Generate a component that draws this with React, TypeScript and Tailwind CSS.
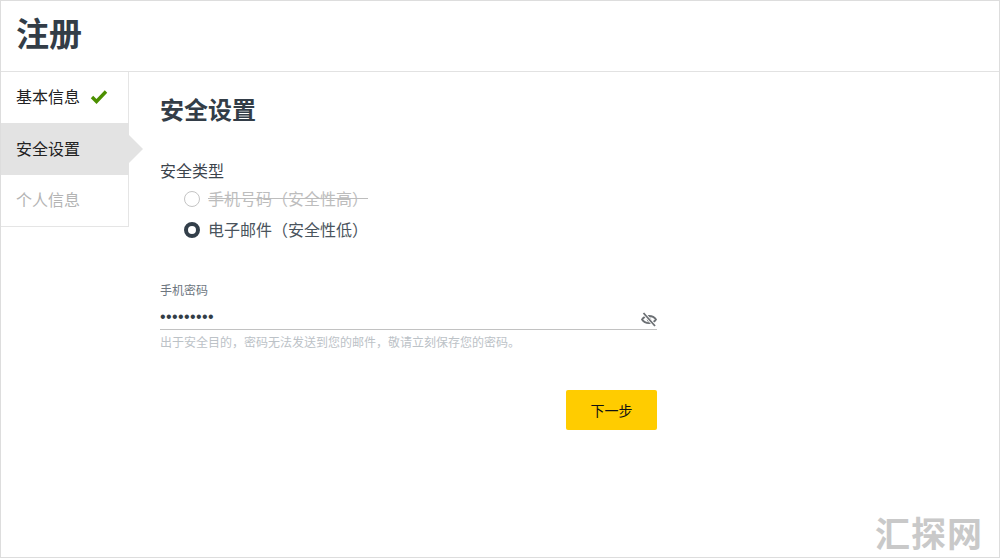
export default function App() {
  return (
    <div className="relative flex h-[558px] w-[1000px] flex-col overflow-hidden border border-[#dddddd] bg-white font-['Noto_Sans_CJK_SC','Noto_Sans',sans-serif] text-[#333d47]">
      <header className="flex h-[71px] shrink-0 items-center border-b border-[#e2e2e2] pb-[7px] pl-[15px]">
        <h1 className="text-[33px] leading-none font-bold text-[#333d47]">注册</h1>
      </header>
      <div className="flex flex-1">
        <nav className="flex h-[155px] w-[128px] shrink-0 flex-col border-r border-b border-[#e5e5e5] text-[16px]">
          <div className="flex h-[51px] items-center gap-[10px] pl-[15px] text-[#222222]">
            <span className="pb-[4px]">基本信息</span>
            <svg width="18" height="16" viewBox="0 0 18 16" className="mb-[1px] text-[#4c8f00]">
              <path d="M2 8 L6.5 12.5 L16 2.5" fill="none" stroke="currentColor" strokeWidth="3.4" />
            </svg>
          </div>
          <div className="relative -mr-px flex h-[52px] items-center bg-[#e3e3e3] pb-[2px] pl-[15px] text-[#222222]">
            安全设置
            <span className="absolute top-[12px] left-full h-0 w-0 border-y-[14px] border-l-[14px] border-y-transparent border-l-[#e3e3e3]" />
          </div>
          <div className="flex h-[51px] items-center pb-[4px] pl-[15px] text-[#b4b4b4]">个人信息</div>
        </nav>
        <main className="flex w-[528px] flex-col pl-[31px]">
          <h2 className="mt-[22px] text-[24px] leading-[30px] font-bold text-[#333d47]">安全设置</h2>
          <p className="mt-[36px] text-[16px] leading-5 text-[#3c444c]">安全类型</p>
          <div className="mt-[9px] flex h-[20px] items-center gap-[8px] pl-[24px] text-[16px] text-[#bdbdbd]">
            <span className="h-4 w-4 rounded-full border border-[#c4c4c4]" />
            <span className="pb-[2px] line-through">手机号码（安全性高）</span>
          </div>
          <div className="mt-[11px] flex h-[20px] items-center gap-[8px] pl-[24px] text-[16px] text-[#4a545d]">
            <span className="h-4 w-4 rounded-full border-[4px] border-[#333f4a] bg-white" />
            <span className="pb-[2px]">电子邮件（安全性低）</span>
          </div>
          <label className="mt-[42px] text-[12px] leading-4 text-[#6d7680]">手机密码</label>
          <div className="mt-[9px] flex h-[23px] items-center justify-between border-b border-[#c2c2c2]">
            <span className="pb-[2px] font-['Liberation_Sans',sans-serif] text-[16px] tracking-[0.4px] text-[#333d47]">•••••••••</span>
            <svg width="16" height="15" viewBox="0 0 16 15" className="mt-[3px] text-[#6b6f73]">
              <path d="M1 7.5 C4 2.8 12 2.8 15 7.5 C12 12.2 4 12.2 1 7.5Z" fill="none" stroke="currentColor" strokeWidth="1.8" />
              <circle cx="8" cy="7.5" r="2.2" fill="currentColor" />
              <path d="M2.5 1 L14 14" stroke="#ffffff" strokeWidth="3.4" />
              <path d="M2.5 1 L14 14" stroke="currentColor" strokeWidth="1.8" />
            </svg>
          </div>
          <p className="mt-[4px] text-[12px] leading-4 text-[#bcc2c7]">出于安全目的，密码无法发送到您的邮件，敬请立刻保存您的密码。</p>
          <div className="mt-[40px] flex justify-end">
            <button className="h-[40px] w-[91px] rounded-[2px] bg-[#ffcc00] text-[14px] text-[#111111]">下一步</button>
          </div>
        </main>
      </div>
      <div className="absolute right-[16px] bottom-[3px] text-[35px] leading-[44px] font-bold tracking-[1px] text-[#c9c9c9]">汇探网</div>
    </div>
  );
}
